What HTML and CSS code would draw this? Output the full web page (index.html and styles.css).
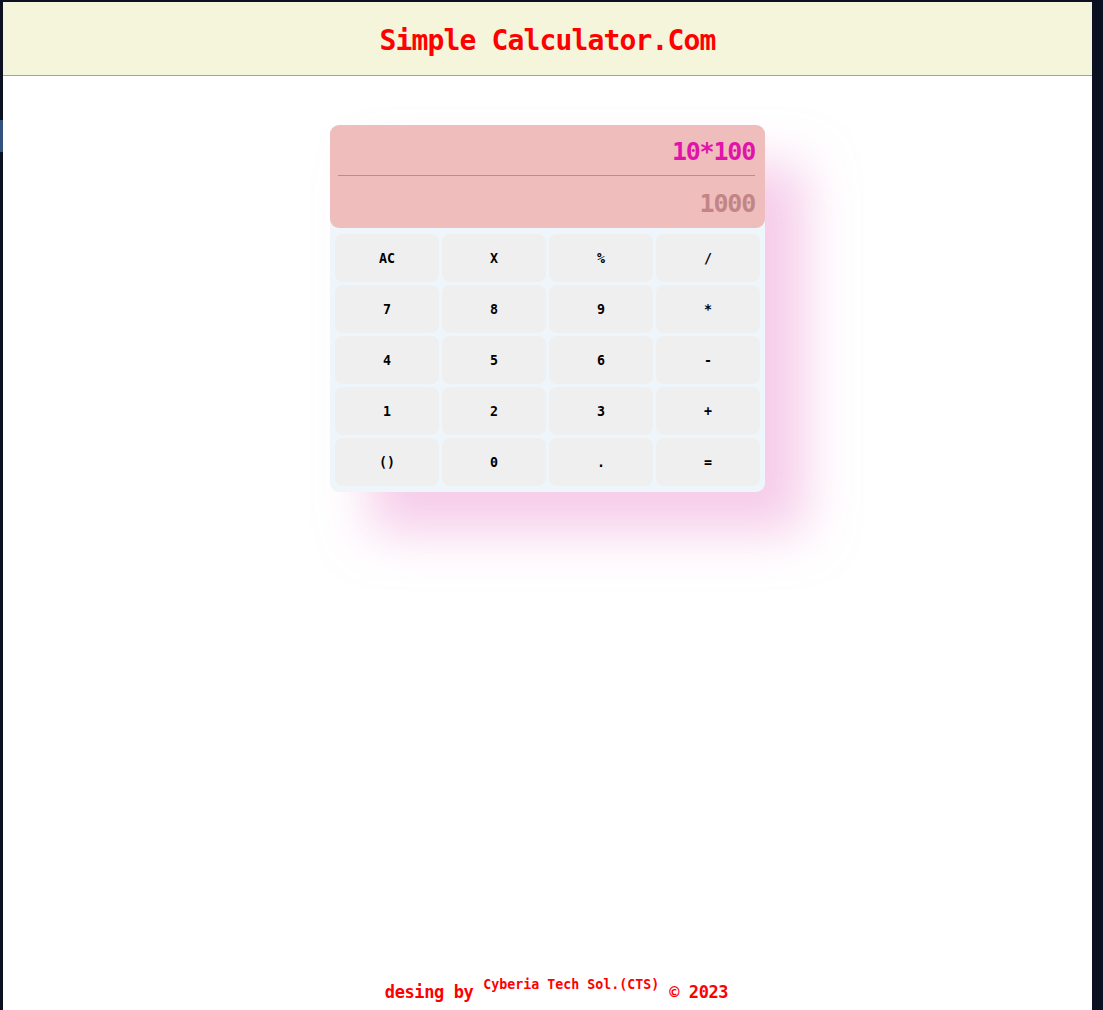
FILE: index.html
```html
<!DOCTYPE html>
<html lang="en">
<head>
<meta charset="utf-8">
<title>Simple Calculator.Com</title>
<link rel="stylesheet" href="styles.css">
</head>
<body>
<div class="edge"><div class="edge-mark"></div></div>
<div class="page">
  <header class="header">
    <h1 class="title">Simple Calculator.Com</h1>
  </header>
  <main class="main">
    <div class="calc">
      <div class="display">
        <div class="expr">10*100</div>
        <hr class="rule">
        <div class="result">1000</div>
      </div>
      <div class="keys">
        <button class="key">AC</button>
        <button class="key">X</button>
        <button class="key">%</button>
        <button class="key">/</button>
        <button class="key">7</button>
        <button class="key">8</button>
        <button class="key">9</button>
        <button class="key">*</button>
        <button class="key">4</button>
        <button class="key">5</button>
        <button class="key">6</button>
        <button class="key">-</button>
        <button class="key">1</button>
        <button class="key">2</button>
        <button class="key">3</button>
        <button class="key">+</button>
        <button class="key">()</button>
        <button class="key">0</button>
        <button class="key">.</button>
        <button class="key">=</button>
      </div>
    </div>
  </main>
  <footer class="footer">desing by <sup class="brand">Cyberia Tech Sol.(CTS)</sup> © 2023</footer>
</div>
</body>
</html>
```

FILE: styles.css
```css
html, body {
  margin: 0;
  padding: 0;
}
body {
  background: #0b1120;
  display: flex;
  align-items: flex-start;
  height: 1010px;
  overflow: hidden;
  font-family: "DejaVu Sans Mono", monospace;
}
.edge {
  width: 3px;
  height: 1010px;
  flex: none;
}
.edge-mark {
  margin-top: 120px;
  height: 32px;
  background: #34527f;
}
.page {
  margin-top: 2px;
  width: 1089px;
  height: 1008px;
  background: #ffffff;
  display: flex;
  flex-direction: column;
  flex: none;
}
.header {
  height: 73px;
  background: #f5f5dc;
  border-bottom: 1px solid #a3a39a;
  display: flex;
  align-items: center;
  justify-content: center;
}
.title {
  margin: 0;
  font-size: 28px;
  font-weight: bold;
  letter-spacing: -0.86px;
  color: #ff0000;
  padding-top: 3px;
}
.main {
  padding-top: 49px;
}
.calc {
  width: 435px;
  margin: 0 auto;
  border-radius: 9px;
  box-shadow: 40px 40px 50px rgba(240, 170, 220, 0.6);
  background: #eef6fc;
}
.display {
  height: 103px;
  box-sizing: border-box;
  background: #f0bdbd;
  border-radius: 9px;
  padding: 8px 10px 0 8px;
  text-align: right;
}
.expr {
  font-size: 25px;
  line-height: 38px;
  font-weight: bold;
  letter-spacing: -1.2px;
  margin-right: 0;
  color: #e114a9;
}
.rule {
  margin: 4px 0 0 0;
  border: none;
  height: 1px;
  background: #a89494;
}
.result {
  margin-top: 9px;
  font-size: 25px;
  line-height: 38px;
  font-weight: bold;
  letter-spacing: -1.2px;
  margin-right: 0;
  color: #c28585;
}
.keys {
  display: grid;
  grid-template-columns: repeat(4, 104px);
  grid-auto-rows: 48px;
  gap: 3px;
  padding: 6px 5px 6px 5px;
  border-radius: 0 0 9px 9px;
}
.key {
  border: none;
  border-radius: 8px;
  background: #efefef;
  color: #000000;
  font-family: "DejaVu Sans Mono", monospace;
  font-size: 13.3px;
  font-weight: bold;
  padding: 0;
  margin: 0;
}
.footer {
  margin-top: auto;
  text-align: center;
  color: #ff0000;
  font-size: 17px;
  font-weight: bold;
  letter-spacing: -0.4px;
  line-height: 24px;
  padding: 0 0 6px 18px;
}
.brand {
  font-size: 13.3px;
  letter-spacing: 0;
  line-height: 0;
  vertical-align: 9px;
}
```
